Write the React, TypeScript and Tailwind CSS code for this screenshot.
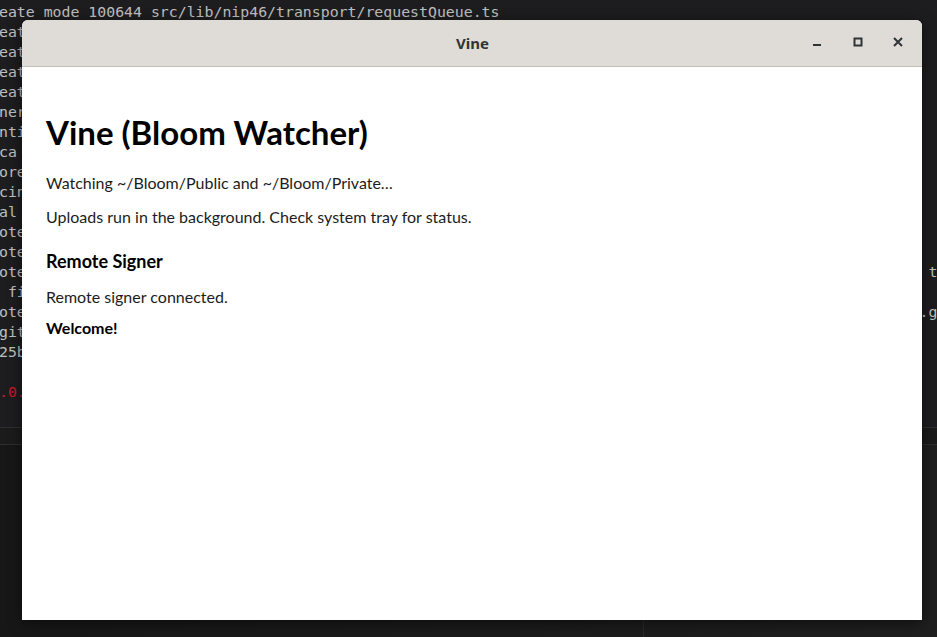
import React from "react";

// only the bits of the terminal that peek out around the window
const termLines: { text: string; red?: boolean }[] = [
  { text: "eate mode 100644 src/lib/nip46/transport/index.ts" },
  { text: "eate mode 100644 src/lib/nip46/transport/requestQueue.ts" },
  { text: "eate" },
  { text: "eate" },
  { text: "eate" },
  { text: "eate" },
  { text: "ner" },
  { text: "nti" },
  { text: "ca" },
  { text: "ore" },
  { text: "cin" },
  { text: "al" },
  { text: "ote" },
  { text: "ote" },
  { text: "ote".padEnd(104) + "t" },
  { text: " fi" },
  { text: "ote".padEnd(103) + ".g" },
  { text: "git" },
  { text: "25b" },
  { text: "" },
  { text: ".0.", red: true },
];

function TitleButton({ children }: { children: React.ReactNode }) {
  return (
    <div className="w-[24px] h-[24px] flex items-center justify-center text-[#2e3436]">
      {children}
    </div>
  );
}

export default function App() {
  return (
    <div className="relative w-[937px] h-[637px] overflow-hidden bg-[#1d1d1f]">
      {/* terminal behind the window */}
      <div className="flex flex-col h-full">
        <div className="h-[427px] overflow-hidden bg-[#1d1d1f]">
          <div className="-mt-[18px] -ml-[1px] font-['DejaVu_Sans_Mono',monospace] text-[14.85px] leading-[20px] text-[#c0c0c0] whitespace-pre">
            {termLines.map((l, i) => (
              <div key={i} className={l.red ? "text-[#c01c28]" : ""}>
                {l.text || " "}
              </div>
            ))}
          </div>
        </div>
        <div className="h-[18px] border-t border-b border-[#2e2e30] bg-[#1b1b1c]" />
        <div className="flex-1 flex bg-gradient-to-r from-[#171717] to-[#1f1f1f]">
          <div className="w-[644px] border-r border-[#2a2a2a]" />
          <div className="flex-1" />
        </div>
      </div>

      {/* app window */}
      <div className="absolute left-[22px] top-[20px] w-[900px] h-[600px] flex flex-col rounded-t-[6px] shadow-[0_3px_14px_rgba(0,0,0,0.55)] overflow-hidden bg-white">
        <div className="h-[47px] shrink-0 bg-[#dfdcd8] border-b border-[#c3bfba] flex items-center relative">
          <div className="flex-1 text-center font-['Noto_Sans',sans-serif] font-bold text-[15px] text-[#2e3436] pl-[1px]">
            Vine
          </div>
          <div className="absolute right-[12px] top-[10px] flex items-center gap-[16px]">
            <TitleButton>
              <svg width="10" height="10" viewBox="0 0 10 10">
                <rect x="0" y="7" width="8" height="2" fill="currentColor" />
              </svg>
            </TitleButton>
            <TitleButton>
              <svg width="10" height="10" viewBox="0 0 10 10">
                <rect x="1.5" y="1.5" width="7" height="7" fill="none" stroke="currentColor" strokeWidth="2" />
              </svg>
            </TitleButton>
            <TitleButton>
              <svg width="10" height="10" viewBox="0 0 10 10">
                <path d="M1 1 L9 9 M9 1 L1 9" stroke="currentColor" strokeWidth="2" />
              </svg>
            </TitleButton>
          </div>
        </div>

        <div className="flex-1 px-[24px] pt-[46px] font-['Lato',sans-serif] text-[#1c1c1c]">
          <h1 className="text-[33px] leading-[38px] font-bold text-black">Vine (Bloom Watcher)</h1>
          <p className="mt-[20px] text-[16px] leading-[24px]">Watching ~/Bloom/Public and ~/Bloom/Private…</p>
          <p className="mt-[10px] text-[16px] leading-[24px]">Uploads run in the background. Check system tray for status.</p>
          <h2 className="mt-[20px] text-[18px] leading-[24px] font-bold text-black">Remote Signer</h2>
          <p className="mt-[12px] text-[16px] leading-[24px]">Remote signer connected.</p>
          <p className="mt-[7px] text-[16px] leading-[24px] font-bold text-black">Welcome!</p>
        </div>
      </div>
    </div>
  );
}
